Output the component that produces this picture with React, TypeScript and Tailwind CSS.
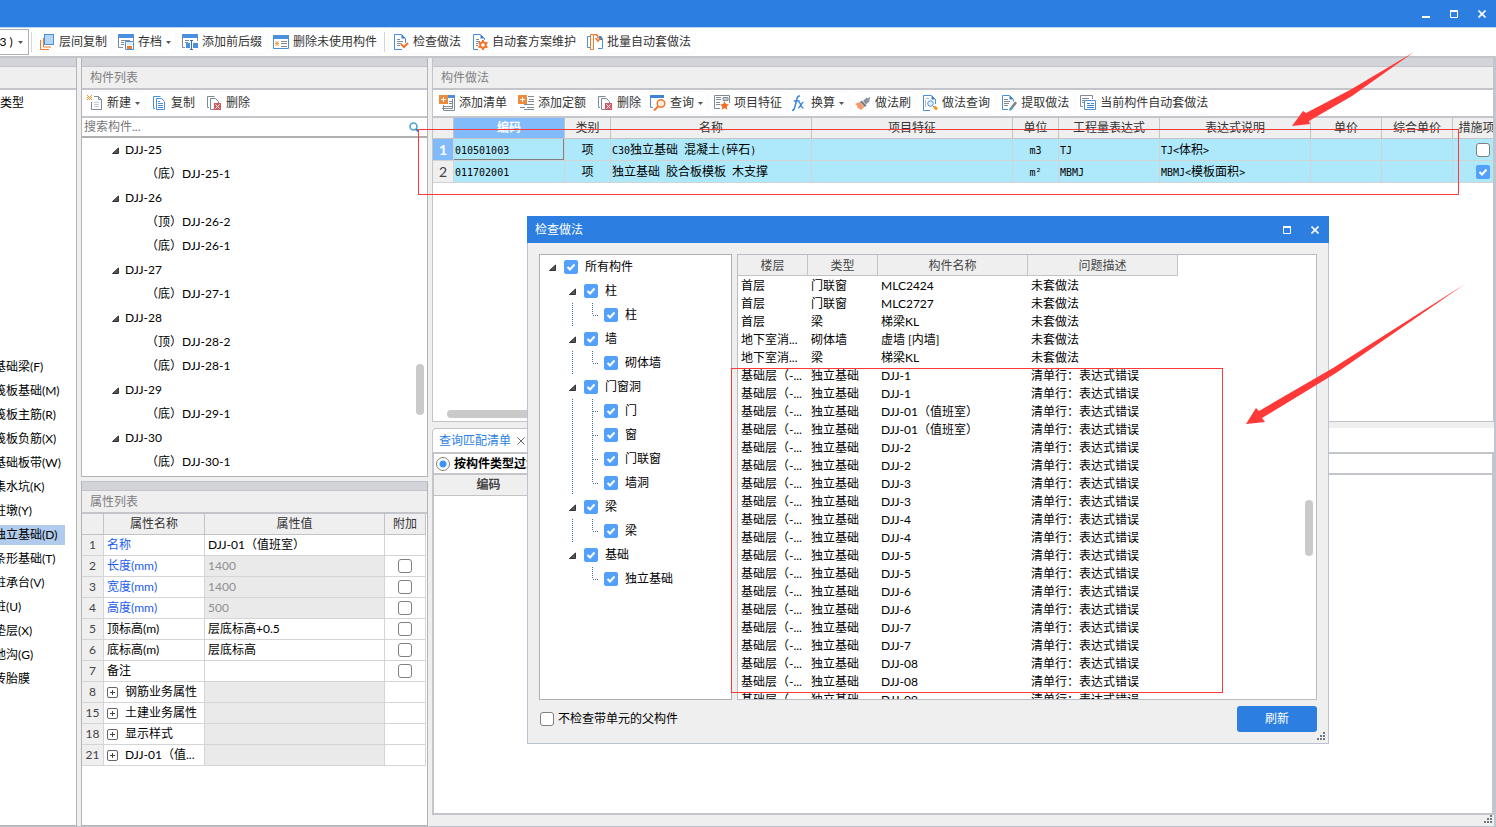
import type { ReactNode } from 'react';
import { useState } from 'react';
import clsx from 'clsx';

interface ToolItem {
  label: string;
  icon: keyof typeof icons;
  caret?: boolean;
  separatorAfter?: boolean;
  tight?: boolean;
}

interface PropertyRow {
  no: number;
  name: string;
  value?: string;
  blue?: boolean;
  readOnly?: boolean;
  checkable?: boolean;
  group?: boolean;
}

interface CheckNode {
  label: string;
  level: number;
  last?: boolean;
  lastParent?: boolean;
}

const icons = {
  layerCopy: (
    <>
      <path d="M2.500 6v9.500h8.500M5.500 4v9h7.500" transform="translate(-1 0)" fill="none" stroke="#f0772b" />
      <rect x="5.500" y="0.500" width="9" height="10" fill="#b7d5fb" stroke="#4a8fdc" />
    </>
  ),
  archive: (
    <>
      <path d="M0.500 1v12.500H5M15.500 3v4" fill="none" stroke="#808a94" />
      <path d="M0 0h16v4H0z" fill="#4a90dd" />
      <path d="M3 6.500h9M3 8.500h3M3 10.500h3" stroke="#808a94" />
      <path d="M7.500 7.500h8v8h-8z" fill="#fff" stroke="#4a8fdc" />
      <path d="M9 8h5v3H9z" fill="#dbe9fa" />
      <path d="M9 12h5v3H9z" fill="#f0772b" />
    </>
  ),
  affix: (
    <>
      <path d="M0.500 1v12.500H3M15.500 3v4" fill="none" stroke="#808a94" />
      <path d="M0 0h16v4H0z" fill="#4a90dd" />
      <path d="M3 6.500h4M3 8.500h3" stroke="#808a94" />
      <path d="M8 6.500h3M9.500 7v9M8 15.500h3" stroke="#2f6fc0" fill="none" />
      <path d="M4 9h4v5H4zM11 9h5v5h-5z" fill="#4a90dd" />
    </>
  ),
  removeUnused: (
    <>
      <path d="M0.500 1.500h15v13h-15z" fill="#fff" stroke="#4a8fdc" />
      <path d="M0 1h16v4H0z" fill="#4a90dd" />
      <path d="M2.500 7l3 5M5.500 7l-3 5M2 9.500h4" stroke="#f2a33c" />
      <path d="M8 7.500h6M8 9.500h6M8 12.500h6" stroke="#808a94" />
    </>
  ),
  checkDoc: (
    <>
      <path d="M9 15.500H1.500v-15h7l4 4V9" fill="#fff" stroke="#4a8fdc" />
      <path d="M8.500 0.500v4h4z" fill="#3b7fce" />
      <path d="M4 5.500h3M4 7.500h6M4 9.500h4M4 11.500h3" stroke="#808a94" />
      <path d="M8 10l3 3 4-4" fill="none" stroke="#f0772b" strokeWidth="2" />
    </>
  ),
  gearDoc: (
    <>
      <path d="M6 15.500H1.500v-15h7l4 4V6" fill="#fff" stroke="#4a8fdc" />
      <path d="M8.500 0.500v4h4z" fill="#3b7fce" />
      <path d="M4 5.500h3M4 7.500h4M4 9.500h2M4 11.500h2" stroke="#808a94" />
      <path d="M11 6v2M11 14v2M6.500 8.500l1.800 1M13.700 12.500l1.800 1M6.500 13.500l1.800-1M13.700 9.500l1.800-1" stroke="#f0772b" strokeWidth="2" />
      <circle cx="11" cy="11" r="2.800" fill="#fff" stroke="#f0772b" strokeWidth="2" />
    </>
  ),
  batch: (
    <>
      <path d="M3 2.500H0.500v11H3M11 14.500h4.500V6" fill="none" stroke="#4a8fdc" />
      <path d="M12 2h2l2 3v1h-4z" fill="#3b7fce" />
      <path d="M3.500 15.500v-15h3v15z" fill="#fff" stroke="#f0772b" />
      <path d="M6.500 0.500H8c2.500 0 3 1.500 3 4" fill="none" stroke="#f0772b" strokeWidth="1.500" />
      <path d="M8.500 4l2.500 3L13.500 4" fill="none" stroke="#f0772b" strokeWidth="1.500" />
    </>
  ),
  newDoc: (
    <>
      <path d="M7 1.500h4.500l3 3v10h-10V7" fill="#fff" stroke="#808a94" />
      <path d="M11.500 1.500v3h3" fill="none" stroke="#808a94" />
      <path d="M7 7.500h5M7 9.500h5M7 11.500h5" stroke="#c5cad0" />
      <path d="M1 1h1v1H1zM3 1h1v1H3zM2 2h1v1H2zM0 2h1v1H0zM4 2h1v1H4zM1 3h1v1H1zM3 3h1v1H3zM2 4h1v1H2zM0 4h1v1H0zM4 4h1v1H4zM0 0h1v1H0zM4 0h1v1H4z" fill="#f2961f" />
    </>
  ),
  copyDoc: (
    <>
      <path d="M4 13.500H2.500v-12h7" fill="none" stroke="#4a8fdc" />
      <path d="M5.500 3.500h5l3 3v8h-8z" fill="#fff" stroke="#4a8fdc" />
      <path d="M7 6.500h2M7 8.500h5M7 10.500h5M7 12.500h5" stroke="#4a8fdc" />
    </>
  ),
  deleteDoc: (
    <>
      <path d="M3 12.500H1.500v-11h7" fill="none" stroke="#808a94" />
      <path d="M8 14.500H4.500v-11h5l3 3V8" fill="#fff" stroke="#808a94" />
      <path d="M8 8h7v7H8z" fill="#d05a5f" />
      <path d="M9.500 9.500l4 4M13.500 9.500l-4 4" stroke="#fff" />
    </>
  ),
  addList: (
    <>
      <path d="M10 1.500h5.500v14h-11V10M13.500 4v9.500H3" fill="none" stroke="#808a94" />
      <path d="M9 0h7v3H9z" fill="#4a90dd" />
      <path d="M10 6.500h3M10 8.500h3M5 11.500h8" stroke="#808a94" />
      <path d="M0 0h9v9H0z" fill="#ef8b3e" />
      <path d="M2 4.500h5M4.500 2v5" stroke="#fff" />
    </>
  ),
  addQuota: (
    <>
      <path d="M10 1.500h6M11 4.500h5M10 6.500h6M6 9.500h10M2 12.500h5M9 12.500h7M6 14.500h10" stroke="#808a94" />
      <path d="M0 0h9v9H0z" fill="#ef8b3e" />
      <path d="M2 4.500h5M4.500 2v5" stroke="#fff" />
    </>
  ),
  query: (
    <>
      <path d="M0.500 1v11.500H3" fill="none" stroke="#4a8fdc" />
      <path d="M0 0h14v3H0z" fill="#3b84da" />
      <circle cx="11" cy="8.500" r="3.800" fill="#fdeee2" stroke="#f0772b" strokeWidth="1.500" />
      <path d="M8 11.500l-4 4" stroke="#f0772b" strokeWidth="2" />
    </>
  ),
  feature: (
    <>
      <path d="M6 13.500H0.500v-13h15V8" fill="none" stroke="#808a94" />
      <path d="M2 2.500h5M2 4.500h5M2 7.500h4M2 9.500h4M9 2.500h5v3H9z" stroke="#808a94" fill="#c9cdd2" />
      <path d="M10.500 6l1.400 3 3.100.4-2.300 2.100.7 3.200-2.900-1.600-2.800 1.600.6-3.200L6 9.400 9.200 9z" fill="#ee6f23" />
    </>
  ),
  fx: (
    <>
      <path d="M1 15.500c2 0 2.500-1.500 3-4L6 3.500C6.500 1.500 7.500 .7 9 1M2.800 6h6" fill="none" stroke="#3b84da" strokeWidth="1.500" />
      <path d="M7.500 7.500c2-1 2.500 6 5 5.500M12.500 7.200c-1.500 0-4 6-5.500 6" fill="none" stroke="#3b84da" strokeWidth="1.300" />
    </>
  ),
  brush: (
    <>
      <path d="M8 6l3.500-3.500 1 1 2-1.500 1 1-1.500 2 .8 1L11 9.500z" fill="#8a949e" />
      <path d="M6.500 5.500l5 5-1.500 1.500-5-5z" fill="#6d7882" />
      <path d="M4.500 7l5 5L6 15 4 13.500 2.500 13 2 10.500 0 9z" fill="#f39a6c" />
    </>
  ),
  docSearch: (
    <>
      <path d="M8 15.500H1.500v-15h8l4 4V9" fill="#fff" stroke="#4a8fdc" />
      <path d="M9.500 0.500v4h4z" fill="#3b7fce" />
      <path d="M4 3.500h3M3.500 5v7" stroke="#b0b7be" />
      <circle cx="8.500" cy="8.500" r="2.800" fill="#e3effc" stroke="#4a8fdc" />
      <path d="M10.500 10.500l1.500 1.500" stroke="#808a94" />
      <path d="M11 12.500l2-2 3 3-2 2z" fill="#f39a1f" />
    </>
  ),
  extract: (
    <>
      <path d="M7 14.500H1.500v-14h7l4 4v2" fill="#fff" stroke="#4a8fdc" />
      <path d="M8.500 0.500v4h4z" fill="#3b7fce" />
      <path d="M3 4.500h4M3 6.500h6M3 8.500h5M3 10.500h4" stroke="#808a94" />
      <path d="M8.500 13.500l5.500-7 2 1.500-5.500 7-2.500.7z" fill="#77828c" />
      <path d="M9.500 15l2-2.500" stroke="#3fb0d6" strokeWidth="2" />
    </>
  ),
  autoCurrent: (
    <>
      <path d="M3 11.500H0.500v-11h12V4M2 3.500h7M2 5.500h2M2 7.500h2" fill="none" stroke="#808a94" />
      <path d="M4.500 5.500h11v9h-11z" fill="#fff" stroke="#4a8fdc" />
      <path d="M7 8.500h3M11 8.500h3M7 10.500h7M7 12.500h7" stroke="#3b84da" />
    </>
  ),
};

const mainTools: ToolItem[] = [
  { label: '层间复制', icon: 'layerCopy' },
  { label: '存档', icon: 'archive', caret: true },
  { label: '添加前后缀', icon: 'affix' },
  { label: '删除未使用构件', icon: 'removeUnused', separatorAfter: true },
  { label: '检查做法', icon: 'checkDoc' },
  { label: '自动套方案维护', icon: 'gearDoc' },
  { label: '批量自动套做法', icon: 'batch' },
];

const listTools: ToolItem[] = [
  { label: '新建', icon: 'newDoc', caret: true },
  { label: '复制', icon: 'copyDoc' },
  { label: '删除', icon: 'deleteDoc' },
];

const methodTools: ToolItem[] = [
  { label: '添加清单', icon: 'addList' },
  { label: '添加定额', icon: 'addQuota' },
  { label: '删除', icon: 'deleteDoc' },
  { label: '查询', icon: 'query', caret: true, tight: true },
  { label: '项目特征', icon: 'feature' },
  { label: '换算', icon: 'fx', caret: true, tight: true },
  { label: '做法刷', icon: 'brush' },
  { label: '做法查询', icon: 'docSearch' },
  { label: '提取做法', icon: 'extract' },
  { label: '当前构件自动套做法', icon: 'autoCurrent' },
];

const categories = [
  '基础梁(F)', '筏板基础(M)', '筏板主筋(R)', '筏板负筋(X)', '基础板带(W)', '集水坑(K)', '柱墩(Y)',
  '独立基础(D)', '条形基础(T)', '桩承台(V)', '桩(U)', '垫层(X)', '地沟(G)', '砖胎膜',
];

const components = [
  { name: 'DJJ-25', children: ['（底）DJJ-25-1'] },
  { name: 'DJJ-26', children: ['（顶）DJJ-26-2', '（底）DJJ-26-1'] },
  { name: 'DJJ-27', children: ['（底）DJJ-27-1'] },
  { name: 'DJJ-28', children: ['（顶）DJJ-28-2', '（底）DJJ-28-1'] },
  { name: 'DJJ-29', children: ['（底）DJJ-29-1'] },
  { name: 'DJJ-30', children: ['（底）DJJ-30-1'] },
];

const properties: PropertyRow[] = [
  { no: 1, name: '名称', value: 'DJJ-01（值班室）', blue: true },
  { no: 2, name: '长度(mm)', value: '1400', blue: true, readOnly: true, checkable: true },
  { no: 3, name: '宽度(mm)', value: '1400', blue: true, readOnly: true, checkable: true },
  { no: 4, name: '高度(mm)', value: '500', blue: true, readOnly: true, checkable: true },
  { no: 5, name: '顶标高(m)', value: '层底标高+0.5', checkable: true },
  { no: 6, name: '底标高(m)', value: '层底标高', checkable: true },
  { no: 7, name: '备注', checkable: true },
  { no: 8, name: '钢筋业务属性', group: true, readOnly: true },
  { no: 15, name: '土建业务属性', group: true, readOnly: true },
  { no: 18, name: '显示样式', group: true, readOnly: true },
  { no: 21, name: 'DJJ-01（值...', group: true, readOnly: true },
];

const methodHeaders = ['类别', '名称', '项目特征', '单位', '工程量表达式', '表达式说明', '单价', '综合单价', '措施项目'];

const methodRows = [
  { code: '010501003', type: '项', name: 'C30独立基础 混凝土(碎石)', unit: 'm3', expr: 'TJ', note: 'TJ<体积>', measure: false },
  { code: '011702001', type: '项', name: '独立基础 胶合板模板 木支撑', unit: 'm²', expr: 'MBMJ', note: 'MBMJ<模板面积>', measure: true },
];

const checkNodes: CheckNode[] = [
  { label: '所有构件', level: 0 },
  { label: '柱', level: 1 },
  { label: '柱', level: 2, last: true },
  { label: '墙', level: 1 },
  { label: '砌体墙', level: 2, last: true },
  { label: '门窗洞', level: 1 },
  { label: '门', level: 2 },
  { label: '窗', level: 2 },
  { label: '门联窗', level: 2 },
  { label: '墙洞', level: 2, last: true },
  { label: '梁', level: 1 },
  { label: '梁', level: 2, last: true },
  { label: '基础', level: 1 },
  { label: '独立基础', level: 2, last: true, lastParent: true },
];

const footingNames = [
  'DJJ-1', 'DJJ-1', 'DJJ-01（值班室）', 'DJJ-01（值班室）', 'DJJ-2', 'DJJ-2', 'DJJ-3', 'DJJ-3', 'DJJ-4', 'DJJ-4',
  'DJJ-5', 'DJJ-5', 'DJJ-6', 'DJJ-6', 'DJJ-7', 'DJJ-7', 'DJJ-08', 'DJJ-08', 'DJJ-09',
];

const issues = [
  ['首层', '门联窗', 'MLC2424', '未套做法'],
  ['首层', '门联窗', 'MLC2727', '未套做法'],
  ['首层', '梁', '梯梁KL', '未套做法'],
  ['地下室消...', '砌体墙', '虚墙 [内墙]', '未套做法'],
  ['地下室消...', '梁', '梯梁KL', '未套做法'],
  ...footingNames.map((name) => ['基础层（-...', '独立基础', name, '清单行：表达式错误']),
];

function Caret() {
  return (
    <svg width="5" height="3" aria-hidden="true">
      <path d="M0 0h5L2.500 3z" fill="#555" />
    </svg>
  );
}

function ToolBar({ items, label }: { items: ToolItem[]; label: string }) {
  return (
    <div role="toolbar" aria-label={label} className="flex items-center gap-px">
      {items.map((item) => (
        <div key={item.label} className={clsx('flex items-center', item.tight && '-ml-0.5')}>
          <button className="flex h-6 items-center gap-1 whitespace-nowrap rounded-sm border border-[#fafafa] px-1 text-[#333]">
            <svg width="16" height="16" viewBox="0 0 16 16" aria-hidden="true">{icons[item.icon]}</svg>
            {item.label}
            {item.caret && <Caret />}
          </button>
          {item.separatorAfter && <span className="mx-0.5 h-5 w-px bg-[#d5d5d5]" />}
        </div>
      ))}
    </div>
  );
}

function PanelTitle({ children }: { children?: ReactNode }) {
  return (
    <>
      <div className="h-[9px] shrink-0 border-b border-[#c2c4c9] bg-[#d3d4da]" />
      <div className="flex h-[23px] shrink-0 items-center border-b-2 border-[#c3c5ca] bg-[#efefef] px-2 text-[#808080]">{children}</div>
    </>
  );
}

function CheckBox({ label, checked = false }: { label: string; checked?: boolean }) {
  const [on, setOn] = useState(checked);
  return (
    <span className="relative inline-block size-3.5 shrink-0 align-middle">
      <input
        type="checkbox"
        aria-label={label}
        checked={on}
        onChange={(e) => setOn(e.target.checked)}
        className="peer block size-3.5 appearance-none rounded-[3px] border border-[#808080] bg-white checked:rounded-xs checked:border-[#53a0fd] checked:bg-[#53a0fd]"
      />
      <svg width="14" height="14" className="pointer-events-none absolute inset-0 hidden peer-checked:block" aria-hidden="true">
        <path d="M3.500 7l2.500 2.500L10.500 4.500" fill="none" stroke="#fff" strokeWidth="2" />
      </svg>
    </span>
  );
}

function Expander() {
  return (
    <svg width="7" height="7" className="shrink-0" aria-hidden="true">
      <path d="M6.500 1v5.500h-6z" fill="#555" stroke="#333" />
    </svg>
  );
}

function Grip() {
  return (
    <svg width="8" height="8" aria-hidden="true">
      <path d="M6 0h2v2H6zM3 3h2v2H3zM6 3h2v2H6zM0 6h2v2H0zM3 6h2v2H3zM6 6h2v2H6z" fill="#6f7780" />
    </svg>
  );
}

function WindowButtons({ minimize }: { minimize?: boolean }) {
  return (
    <div className="flex">
      {minimize && (
        <button aria-label="最小化" className="flex h-[27px] w-7 items-center justify-center">
          <svg width="8" height="8"><path d="M0 6h8v2H0z" fill="#fff" /></svg>
        </button>
      )}
      <button aria-label="最大化" className="flex h-[27px] w-7 items-center justify-center">
        <svg width="8" height="8"><path d="M0.500 1v6.500h7V1M0 1h8" fill="none" stroke="#fff" /><path d="M0 0h8v2H0z" fill="#fff" /></svg>
      </button>
      <button aria-label="关闭" className="flex h-[27px] w-7 items-center justify-center">
        <svg width="8" height="8"><path d="M0.500 0.500l7 7M7.500 0.500l-7 7" stroke="#fff" strokeWidth="1.600" /></svg>
      </button>
    </div>
  );
}

// Latin runs are set in a half-width mono face, so two letters take the room of one Chinese character.
function MonoText({ text }: { text: string }) {
  return (
    <>
      {text.split(/([\x20-\x7e²]+)/).filter(Boolean).map((part, i) => (
        /[\x20-\x7e²]/.test(part)
          ? <span key={i} className="whitespace-pre font-['DejaVu_Sans_Mono',monospace] text-[10px]">{part}</span>
          : part
      ))}
    </>
  );
}

function CategoryPanel() {
  return (
    <aside className="flex w-[77px] shrink-0 flex-col overflow-hidden border-b border-r border-[#b4b4b4] bg-white">
      <PanelTitle />
      <div className="flex h-[25px] items-center whitespace-nowrap">类型</div>
      <ul className="-ml-1.5 mt-60">
        {categories.map((name) => (
          <li key={name} className="flex h-6 items-center whitespace-nowrap">
            <span className={clsx('flex h-5 items-center', name === '独立基础(D)' && 'bg-[#b1cbed] pr-[7px]')}>{name}</span>
          </li>
        ))}
      </ul>
    </aside>
  );
}

function ComponentList() {
  return (
    <section className="flex flex-col border border-t-0 border-[#b4b4b4] bg-white">
      <PanelTitle>构件列表</PanelTitle>
      <div className="flex h-7 items-center border-b-2 border-[#c3c5ca]">
        <ToolBar items={listTools} label="构件列表" />
      </div>
      <div className="flex h-5 items-center border-b-2 border-[#b0b0b0] pr-2">
        <input
          aria-label="搜索构件"
          placeholder="搜索构件..."
          className="h-4 min-w-0 flex-1 px-0.5 outline-none placeholder:text-[#777]"
        />
        <svg width="10" height="10" aria-hidden="true">
          <circle cx="4.500" cy="4.500" r="3.500" fill="none" stroke="#4aa3d6" strokeWidth="1.600" />
          <path d="M7 7l2.500 2.500" stroke="#2d83c4" strokeWidth="2" />
        </svg>
      </div>
      <div className="relative pb-0.5">
        <ul>
          {components.map((item) => (
            <li key={item.name}>
              <div className="flex h-6 items-center gap-1.5 pl-[30px]"><Expander />{item.name}</div>
              <ul>
                {item.children.map((child) => (
                  <li key={child} className="flex h-6 items-center pl-16">{child}</li>
                ))}
              </ul>
            </li>
          ))}
        </ul>
        <div className="absolute bottom-[61px] right-[3px] h-[51px] w-2 rounded-full bg-[#cacaca]" />
      </div>
    </section>
  );
}

function PropertyPanel() {
  return (
    <section className="mt-1 flex min-h-0 flex-1 flex-col border border-[#b4b4b4] border-t-[#c2c4c9] bg-white">
      <PanelTitle>属性列表</PanelTitle>
      <div className="pr-px">
        <table className="w-full table-fixed border-separate border-spacing-0">
          <colgroup>
            <col className="w-[22px]" />
            <col className="w-[101px]" />
            <col />
            <col className="w-[41px]" />
          </colgroup>
          <thead>
            <tr className="h-[21px] bg-[#efefef] text-[#333] *:border-b *:border-r *:border-[#c3c3c3] *:p-0 *:font-normal">
              <th aria-label="序号" />
              <th>属性名称</th>
              <th>属性值</th>
              <th>附加</th>
            </tr>
          </thead>
          <tbody>
            {properties.map((row) => (
              <tr key={row.no} className="h-[21px] *:border-b *:border-r *:border-[#d5d5d5] *:p-0">
                <td className="bg-[#efefef] text-center text-[#444]">{row.no}</td>
                <td className={clsx('overflow-hidden whitespace-nowrap', row.blue && 'text-[#1a5cf0]')}>
                  <div className="flex items-center gap-[7px] pl-[3px]">
                    {row.group && (
                      <button aria-label="展开">
                        <svg width="11" height="11" className="block">
                          <rect x="0.500" y="0.500" width="10" height="10" rx="1.500" fill="#fff" stroke="#666" />
                          <path d="M3 5.500h5M5.500 3v5" stroke="#444" />
                        </svg>
                      </button>
                    )}
                    {row.name}
                  </div>
                </td>
                <td className={row.readOnly ? 'bg-[#eaeaea] text-[#909090]' : 'bg-white'}>
                  <span className="pl-[3px]">{row.value}</span>
                </td>
                <td className="text-center leading-none">{row.checkable && <CheckBox label={`附加 ${row.name}`} />}</td>
              </tr>
            ))}
          </tbody>
        </table>
      </div>
    </section>
  );
}

function MethodPanel() {
  return (
    <section className="flex shrink-0 basis-[364px] flex-col overflow-hidden border border-t-0 border-[#c2c4c9] bg-white">
      <PanelTitle>构件做法</PanelTitle>
      <div className="flex h-7 shrink-0 items-center border-b-2 border-[#c3c5ca] pl-px">
        <ToolBar items={methodTools} label="构件做法" />
      </div>
      <div className="flex-1 overflow-hidden">
        <table className="w-[1080px] table-fixed border-separate border-spacing-0">
          <colgroup>
            <col className="w-[21px]" />
            <col className="w-[111px]" />
            <col className="w-[46px]" />
            <col className="w-[201px]" />
            <col className="w-[201px]" />
            <col className="w-[46px]" />
            <col className="w-[101px]" />
            <col className="w-[151px]" />
            <col className="w-[71px]" />
            <col className="w-[71px]" />
            <col className="w-[60px]" />
          </colgroup>
          <thead>
            <tr className="h-[21px] bg-[#efefef] text-[#333] *:border-b *:border-r *:border-[#c3c3c3] *:p-0 *:font-normal">
              <th aria-label="序号" />
              <th className="bg-[#82bbfc] text-white"><b>编码</b></th>
              {methodHeaders.map((name) => (
                <th key={name} className="whitespace-nowrap">{name}</th>
              ))}
            </tr>
          </thead>
          <tbody>
            {methodRows.map((row, i) => (
              <tr key={row.code} className="h-[22px] bg-[#aee9fb] *:whitespace-nowrap *:border-b *:border-r *:border-[#d3d3d3] *:px-px *:py-0">
                <td className={clsx('text-center text-sm', i === 0 ? 'bg-[#82bbfc] font-bold text-white' : 'bg-[#efefef] text-[#444]')}>{i + 1}</td>
                <td className={clsx(i === 0 && 'shadow-[inset_-1px_-1px_0_#808080]')}><MonoText text={row.code} /></td>
                <td className="text-center">{row.type}</td>
                <td><MonoText text={row.name} /></td>
                <td />
                <td className="text-center"><MonoText text={row.unit} /></td>
                <td><MonoText text={row.expr} /></td>
                <td><MonoText text={row.note} /></td>
                <td />
                <td />
                <td className="text-center leading-none"><CheckBox label={`措施项目 ${row.code}`} checked={row.measure} /></td>
              </tr>
            ))}
          </tbody>
        </table>
      </div>
      <div className="mb-[3px] ml-3.5 h-2 w-[700px] shrink-0 rounded-full bg-[#cacaca]" />
    </section>
  );
}

function MatchPanel() {
  return (
    <section className="mt-1.5 flex min-h-0 flex-1 flex-col">
      <div className="flex h-6 shrink-0 bg-white">
        <div className="flex w-[100px] items-center gap-1.5 rounded-t-sm border border-b-0 border-[#c2c4c9] pl-1.5">
          <button className="whitespace-nowrap text-[#2c7fe1]">查询匹配清单</button>
          <button aria-label="关闭查询匹配清单">
            <svg width="8" height="8" className="block"><path d="M0.500 0.500l7 7M7.500 0.500l-7 7" stroke="#666" /></svg>
          </button>
        </div>
      </div>
      <div className="flex min-h-0 flex-1 flex-col border-2 border-[#c3c5ca] bg-white">
        <label className="flex h-[21px] shrink-0 items-center gap-1 border-b-2 border-[#c3c5ca] pl-0.5 font-bold">
          <input
            type="radio"
            name="filter"
            defaultChecked
            className="size-3.5 appearance-none rounded-full border border-[#808080] bg-white checked:bg-[radial-gradient(circle,#3d93f8_3px,#fff_4px)]"
          />
          按构件类型过滤
        </label>
        <table className="w-[110px] border-separate border-spacing-0">
          <thead>
            <tr className="h-[21px] bg-[#efefef]">
              <th className="border-b border-r border-[#c3c3c3] p-0 font-bold text-[#444]">编码</th>
            </tr>
          </thead>
        </table>
      </div>
      <footer className="flex h-[11px] shrink-0 items-start justify-end pr-0.5">
        <Grip />
      </footer>
    </section>
  );
}

function TreeGuides({ node }: { node: CheckNode }) {
  return (
    <svg width="40" height="24" className="shrink-0" stroke="#4a6f9f" strokeDasharray="1 1" aria-hidden="true">
      {!node.lastParent && <path d="M5.500 0v24" />}
      <path d={node.last ? 'M25.500 0v12' : 'M25.500 0v24'} />
      <path d="M26 12.500h6" />
    </svg>
  );
}

function CheckDialog() {
  return (
    <div role="dialog" aria-label="检查做法" className="absolute left-[527px] top-[216px] flex w-[802px] flex-col bg-[#efefef]">
      <header className="flex h-[27px] items-center justify-between bg-[#2c7fe1] pl-2 text-white">
        检查做法
        <WindowButtons />
      </header>
      <div className="border border-t-0 border-[#bcc3d0]">
        <div className="flex h-[457px] gap-[5px] px-[11px] pt-[11px]">
          <ul className="w-[193px] border border-[#b0b0b0] bg-white">
            {checkNodes.map((node, i) => (
              <li key={i} className={clsx('flex h-6 items-center', node.level === 0 && 'pl-[9px]', node.level === 1 && 'pl-[29px]', node.level === 2 && 'pl-[27px]')}>
                {node.level === 2 ? <TreeGuides node={node} /> : <Expander />}
                <span className={clsx('flex items-center gap-[7px]', node.level === 2 ? '-ml-[3px]' : 'ml-2')}>
                  <CheckBox label={node.label} checked />
                  {node.label}
                </span>
              </li>
            ))}
          </ul>
          <div className="relative flex-1 overflow-hidden border border-[#b9bcc2] bg-white">
            <table className="w-[440px] table-fixed border-separate border-spacing-0">
              <colgroup>
                <col className="w-[70px]" />
                <col className="w-[70px]" />
                <col className="w-[150px]" />
                <col className="w-[150px]" />
              </colgroup>
              <thead>
                <tr className="h-[21px] bg-[#efefef] text-[#444] *:border-b *:border-r *:border-[#c3c3c3] *:px-0 *:pb-0 *:pt-0.5 *:font-normal">
                  <th>楼层</th>
                  <th>类型</th>
                  <th>构件名称</th>
                  <th>问题描述</th>
                </tr>
              </thead>
              <tbody>
                {issues.map((row, i) => (
                  <tr key={i} className="h-[18px]">
                    {row.map((cell, j) => (
                      <td key={j} className="whitespace-nowrap p-0 pl-[3px] pt-0.5">{cell}</td>
                    ))}
                  </tr>
                ))}
              </tbody>
            </table>
            <div className="absolute right-[3px] top-[245px] h-14 w-2 rounded-full bg-[#cacaca]" />
          </div>
        </div>
        <div className="flex h-[43px] items-start justify-between pl-3 pr-[11px] pt-1.5">
          <label className="flex h-[26px] items-center gap-1">
            <CheckBox label="不检查带单元的父构件" />
            不检查带单元的父构件
          </label>
          <button className="h-[26px] w-20 rounded-[3px] bg-[#2c7fe1] text-white">刷新</button>
        </div>
        <div className="absolute bottom-1 right-1"><Grip /></div>
      </div>
    </div>
  );
}

function Annotations() {
  return (
    <div className="pointer-events-none absolute inset-0" aria-hidden="true">
      <div className="absolute left-[418px] top-[129px] h-[66px] w-[1041px] border border-[#ff3838]" />
      <div className="absolute left-[731px] top-[368px] h-[325px] w-[492px] border border-[#ff3838]" />
      <svg width="122" height="76" className="absolute left-[1292px] top-[52px]">
        <path d="M122 0L60 44L17 69L18 72L0 74L11 59L14 61L58 38z" fill="#ff3838" />
      </svg>
      <svg width="219" height="142" className="absolute left-[1246px] top-[284px]">
        <path d="M219 0L90 89L16 134L19 138L0 140L10 124L13 127L87 84z" fill="#ff3838" />
      </svg>
    </div>
  );
}

export default function App() {
  return (
    <div className="relative flex h-screen flex-col overflow-hidden border-b border-[#bcc3d0] bg-[#efefef] font-[Lato,'Noto_Sans_CJK_SC',sans-serif] text-xs text-black">
      <header className="flex h-7 shrink-0 justify-end border-b border-[#c2d4ea] bg-[#2c7fe1]">
        <WindowButtons minimize />
      </header>
      <div className="flex h-[30px] shrink-0 items-center border-b-2 border-[#c3c5ca] bg-white">
        <button aria-label="楼层" className="flex h-[26px] w-[29px] items-center gap-1 overflow-hidden whitespace-nowrap border border-l-0 border-[#b0b0b0]">
          <span className="-ml-0.5 w-4 shrink-0">3 )</span>
          <Caret />
        </button>
        <span className="mx-0.5 h-5 w-px bg-[#d5d5d5]" />
        <ToolBar items={mainTools} label="工具栏" />
      </div>
      <main className="flex min-h-0 flex-1 gap-1 border-r-2 border-[#c0c5d0]">
        <CategoryPanel />
        <div className="flex w-[347px] shrink-0 flex-col">
          <ComponentList />
          <PropertyPanel />
        </div>
        <div className="flex min-w-0 flex-1 flex-col">
          <MethodPanel />
          <MatchPanel />
        </div>
      </main>
      <CheckDialog />
      <Annotations />
    </div>
  );
}
